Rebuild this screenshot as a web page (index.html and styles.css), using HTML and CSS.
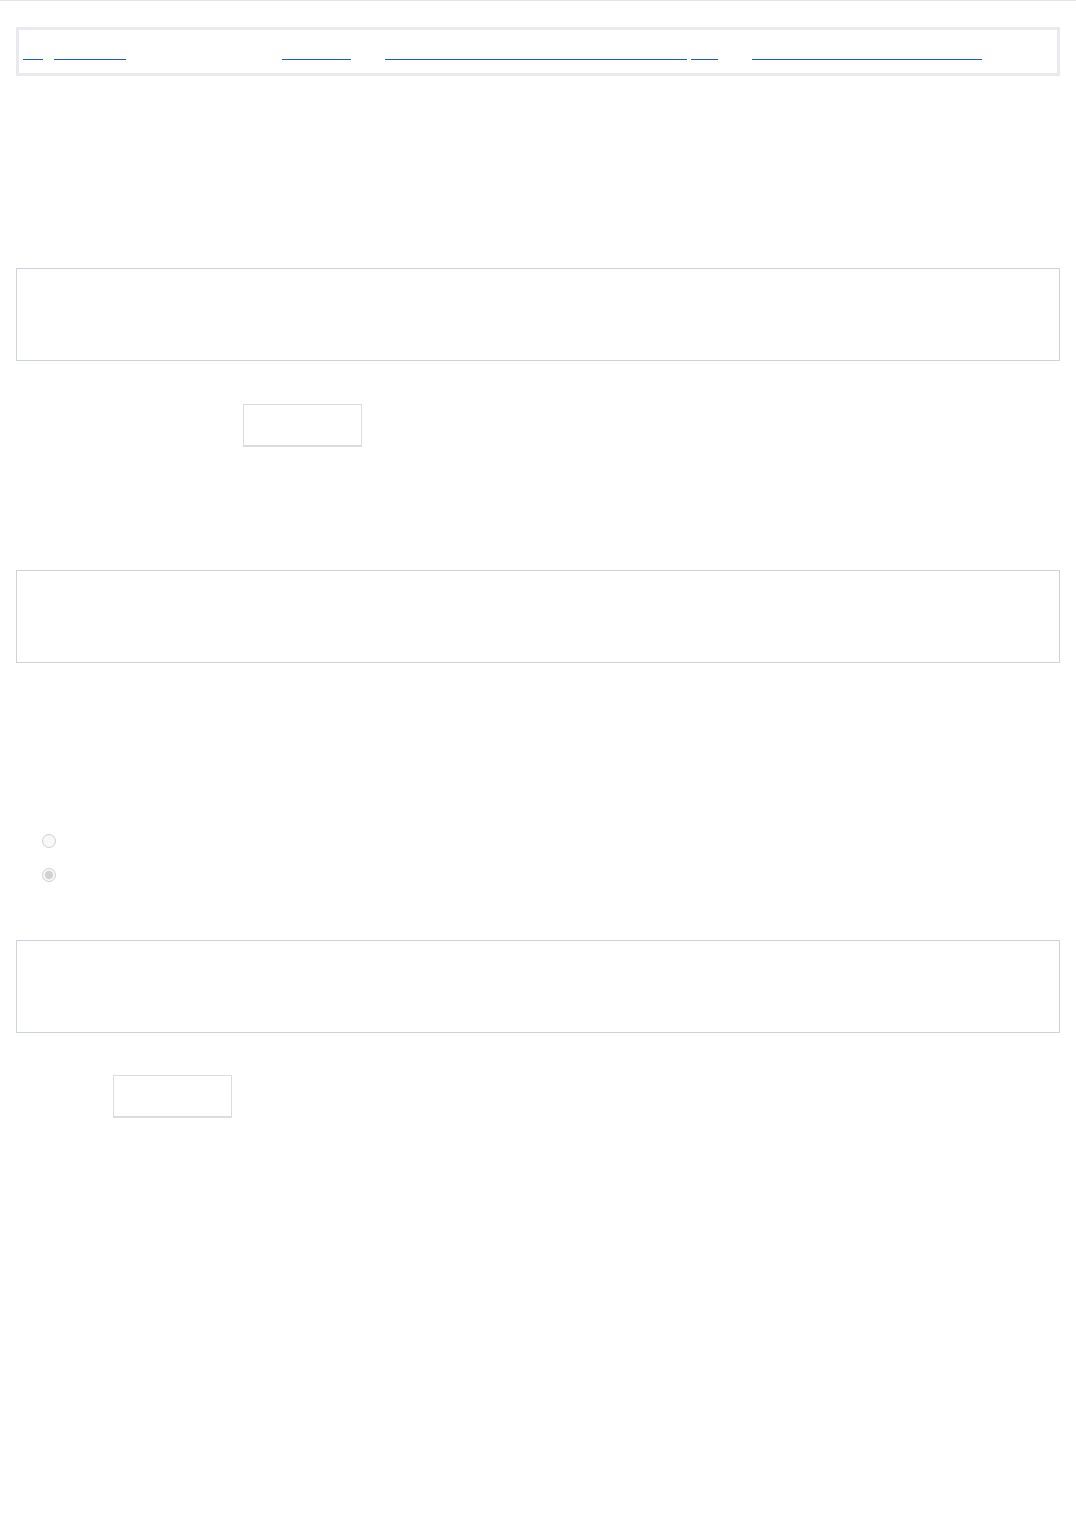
FILE: index.html
```html
<!DOCTYPE html>
<html lang="en">
<head>
  <meta charset="UTF-8" />
  <title>Form</title>
  <link rel="stylesheet" href="styles.css">
</head>
<body>

<div class="page">
  <nav class="crumbs">
    <a href="#" class="w20">Top</a>
    <a href="#" class="w73">Main page</a>
    <span class="sep">Last updated</span>
    <a href="#" class="w69">Contact us</a>
    <a href="#" class="w302">Privacy policy and terms of use</a>
    <a href="#" class="w27">FAQ</a>
    <a href="#" class="w230">Report a problem with this page</a>
  </nav>

  <section class="block first">
    <h2>Message</h2>
    <p>Write your message below.</p>
  </section>
  <div class="panel"></div>

  <div class="row">
    <label class="lbl">Attach a file</label>
    <button class="btn">Browse</button>
  </div>

  <section class="block second">
    <h2>Notes</h2>
  </section>
  <div class="panel"></div>

  <section class="block third">
    <h2>Visibility</h2>
    <label class="opt"><input type="radio" name="vis" disabled> Public</label>
    <label class="opt"><input type="radio" name="vis" checked disabled> Private</label>
  </section>
  <div class="panel"></div>

  <div class="row row-send">
    <label class="lbl short">Send</label>
    <button class="btn">Submit</button>
  </div>
</div>

</body>
</html>
```

FILE: styles.css
```css
body { margin: 0; font-family: 'Liberation Sans', Arial, sans-serif; font-size: 13px; color: #fff; background: #fff; border-top: 1px solid #e4e4e6; }
.page { padding: 0 16px; }

.crumbs { margin-top: 26px; height: 43px; border: 3px solid #e8eaed; display: flex; align-items: center; padding: 0 1px; }
.crumbs a { color: transparent; text-decoration: none; display: block; white-space: nowrap; overflow: hidden; height: 16px; line-height: 16px; border-bottom: 1px solid #1b5ccb; box-sizing: border-box; margin-top: 1px; }
.crumbs .sep { width: 156px; white-space: nowrap; overflow: hidden; }
.crumbs .w20 { width: 20px; margin-left: 3px; }
.crumbs .w73 { width: 72px; margin-left: 11px; }
.crumbs .w69 { width: 69px; }
.crumbs .w302 { width: 302px; margin-left: 34px; }
.crumbs .w27 { width: 27px; margin-left: 4px; }
.crumbs .w230 { width: 230px; margin-left: 34px; }

.block h2 { margin: 0; font-size: 18px; font-weight: normal; line-height: 24px; }
.block p { margin: 8px 0 0; line-height: 18px; }
.block.first { padding: 90px 0 52px; }
.block.second { padding: 76px 0 0; height: 47px; }
.block.third { padding: 125px 0 0; height: 277px; box-sizing: border-box; }
.block.third h2 { margin-bottom: 12px; }

.panel { height: 91px; border: 1px solid #ccd2d9; }

.row { display: flex; align-items: center; margin-top: 43px; }
.lbl { width: 227px; }
.lbl.short { width: 97px; }
.row-send { margin-top: 42px; }

.btn { width: 119px; height: 43px; background: #fff; border: 1px solid #dcdcdc; border-bottom-width: 2px; color: #fff; font: inherit; }

.opt { display: flex; align-items: center; height: 34px; margin-left: 26px; }
.opt input { margin: 0 10px 0 0; width: 14px; height: 14px; }
```
